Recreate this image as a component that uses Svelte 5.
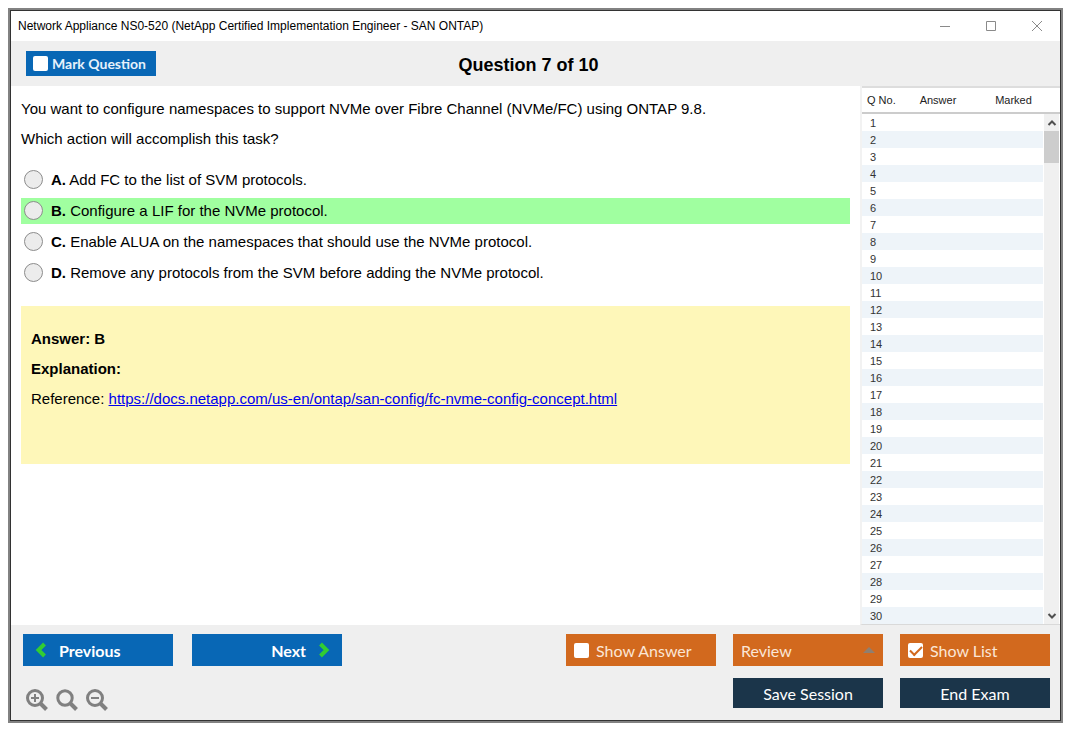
<script>
	const total = 10;
	const current = 7;
	const options = [
		{ id: 'A', text: 'Add FC to the list of SVM protocols.' },
		{ id: 'B', text: 'Configure a LIF for the NVMe protocol.' },
		{ id: 'C', text: 'Enable ALUA on the namespaces that should use the NVMe protocol.' },
		{ id: 'D', text: 'Remove any protocols from the SVM before adding the NVMe protocol.' }
	];
	const answer = 'B';
	const link = 'https://docs.netapp.com/us-en/ontap/san-config/fc-nvme-config-concept.html';
	const rows = Array.from({ length: 30 }, (_, i) => i + 1);

	let selected = $state(null);
	let marked = $state(false);
	let showAnswer = $state(false);
	let showList = $state(true);
</script>

<div class="window">
	<div class="titlebar">
		<span class="title">Network Appliance NS0-520 (NetApp Certified Implementation Engineer - SAN ONTAP)</span>
		<div class="controls">
			<button aria-label="Minimize">
				<svg width="12" height="12" viewBox="0 0 12 12"><path d="M1 6.5h10" /></svg>
			</button>
			<button aria-label="Maximize">
				<svg width="12" height="12" viewBox="0 0 12 12"><path d="M1.5 1.5h9v9h-9z" /></svg>
			</button>
			<button aria-label="Close">
				<svg width="12" height="12" viewBox="0 0 12 12"><path d="M1 1l10 10M11 1L1 11" /></svg>
			</button>
		</div>
	</div>

	<header>
		<label class="mark"><input type="checkbox" bind:checked={marked} />Mark Question</label>
		<h1>Question {current} of {total}</h1>
	</header>

	<main>
		<section class="question">
			<p>You want to configure namespaces to support NVMe over Fibre Channel (NVMe/FC) using ONTAP 9.8.</p>
			<p>Which action will accomplish this task?</p>

			<div class="options">
				{#each options as option}
					<label class="option" class:correct={option.id === answer}>
						<input type="radio" name="option" value={option.id} bind:group={selected} />
						<span><b>{option.id}.</b> {option.text}</span>
					</label>
				{/each}
			</div>

			<div class="explanation">
				<p><b>Answer: {answer}</b></p>
				<p><b>Explanation:</b></p>
				<p>Reference: <a href={link}>{link}</a></p>
			</div>
		</section>

		{#if showList}
			<aside>
				<table>
					<thead>
						<tr>
							<th class="number">Q No.</th>
							<th class="answer">Answer</th>
							<th class="flag">Marked</th>
						</tr>
					</thead>
					<tbody>
						{#each rows as row}
							<tr>
								<td class="number">{row}</td>
								<td></td>
								<td></td>
							</tr>
						{/each}
					</tbody>
				</table>
				<div class="scrollbar">
					<button aria-label="Scroll up">
						<svg width="10" height="8" viewBox="0 0 10 8"><path d="M1.5 6L5 2.5L8.5 6" /></svg>
					</button>
					<div class="thumb"></div>
					<button aria-label="Scroll down">
						<svg width="10" height="8" viewBox="0 0 10 8"><path d="M1.5 2L5 5.5L8.5 2" /></svg>
					</button>
				</div>
			</aside>
		{/if}
	</main>

	<footer>
		<div class="left">
			<div class="nav">
				<button class="btn blue">
					<svg width="12" height="16" viewBox="0 0 12 16"><path d="M9.5 2l-6 6l6 6" /></svg>
					Previous
				</button>
				<button class="btn blue next">
					Next
					<svg width="12" height="16" viewBox="0 0 12 16"><path d="M2.5 2l6 6l-6 6" /></svg>
				</button>
			</div>
			<div class="zoom">
				<button aria-label="Zoom in">
					<svg width="22" height="22" viewBox="0 0 22 22">
						<circle cx="9" cy="9" r="7.5" /><path class="handle" d="M14 14l6.5 6.5" /><path class="sign" d="M5 9h8M9 5v8" />
					</svg>
				</button>
				<button aria-label="Reset zoom">
					<svg width="22" height="22" viewBox="0 0 22 22">
						<circle class="thick" cx="9" cy="9" r="7.2" /><path class="handle" d="M14 14l6.5 6.5" />
					</svg>
				</button>
				<button aria-label="Zoom out">
					<svg width="22" height="22" viewBox="0 0 22 22">
						<circle cx="9" cy="9" r="7.5" /><path class="handle" d="M14 14l6.5 6.5" /><path class="sign" d="M5 9h8" />
					</svg>
				</button>
			</div>
		</div>

		<div class="right">
			<label class="btn orange"><input type="checkbox" bind:checked={showAnswer} />Show Answer</label>
			<button class="btn orange review">
				Review
				<svg width="12" height="6" viewBox="0 0 12 6"><path d="M0 6L6 0l6 6z" /></svg>
			</button>
			<label class="btn orange"><input type="checkbox" bind:checked={showList} />Show List</label>
			<button class="btn navy save">Save Session</button>
			<button class="btn navy">End Exam</button>
		</div>
	</footer>
</div>

<style>
	:global(body) {
		background: #fff;
	}
	:global(#app) {
		box-sizing: border-box;
		min-height: 100vh;
		padding: 8px 12px 12px 8px;
		display: flex;
	}
	* {
		box-sizing: border-box;
	}
	button {
		margin: 0;
		padding: 0;
		border: 0;
		background: none;
		font: inherit;
		color: inherit;
		cursor: pointer;
	}
	svg {
		display: block;
		fill: none;
	}
	.window {
		flex: 1;
		display: flex;
		flex-direction: column;
		border: 2px solid #828282;
		outline: 1px solid #333;
		outline-offset: -3px;
		padding: 1px;
		background: #fff;
		color: #000;
		font-family: 'Liberation Sans', Arial, sans-serif;
		font-size: 15px;
	}
	.titlebar {
		display: flex;
		align-items: center;
		justify-content: space-between;
		height: 30px;
		padding-left: 7px;
		font-size: 12px;
	}
	.controls {
		display: flex;
	}
	.controls button {
		width: 46px;
		height: 28px;
		display: flex;
		align-items: center;
		justify-content: center;
	}
	.controls path {
		stroke: #8a8a8a;
	}
	header {
		display: grid;
		grid-template-columns: 1fr auto 1fr;
		align-items: center;
		height: 45px;
		padding: 0 29px 0 15px;
		background: #efefef;
	}
	.mark {
		justify-self: start;
		display: flex;
		align-items: center;
		gap: 4px;
		width: 130px;
		height: 25px;
		padding-left: 7px;
		background: #0867b5;
		color: #e6f1fb;
		font: bold 14px Lato, sans-serif;
	}
	input[type='checkbox'] {
		appearance: none;
		display: grid;
		place-items: center;
		margin: 0;
		width: 15px;
		height: 15px;
		border-radius: 2px;
		background: #fff;
	}
	input[type='checkbox']:checked::before {
		content: '';
		width: 10px;
		height: 5px;
		border-left: 2px solid #d2691e;
		border-bottom: 2px solid #d2691e;
		transform: translateY(-1px) rotate(-45deg);
	}
	h1 {
		margin: 4px 0 0;
		font-size: 18px;
	}
	main {
		flex: 1;
		display: flex;
	}
	.question {
		flex: 1;
		padding: 14px 10px 0;
	}
	.question p {
		margin: 0 0 12px;
		line-height: 18px;
	}
	.options {
		display: grid;
		gap: 5px;
		margin-top: 19px;
	}
	.option {
		display: flex;
		align-items: center;
		gap: 8px;
		height: 26px;
		padding: 0 0 1px 3px;
	}
	.option.correct {
		background: #a0ffa0;
	}
	input[type='radio'] {
		appearance: none;
		margin: 0;
		width: 19px;
		height: 19px;
		border: 1px solid #8c8c8c;
		border-radius: 50%;
		background: #ececec;
	}
	input[type='radio']:checked {
		background: radial-gradient(#333 4px, #ececec 5px);
	}
	.explanation {
		margin-top: 20px;
		padding: 24px 10px 44px;
		background: #fef7b9;
	}
	a {
		color: #0000ee;
	}
	aside {
		position: relative;
		width: 200px;
		border-left: 2px solid #f2f2f2;
		border-bottom: 1px solid #d9d9d9;
	}
	table {
		width: 100%;
		border-collapse: separate;
		border-spacing: 0;
		table-layout: fixed;
		font-size: 11px;
		color: #333;
	}
	th {
		height: 28px;
		padding: 0;
		border-top: 2px solid #ddd;
		border-bottom: 2px solid #ccc;
		font-weight: normal;
		color: #222;
	}
	td {
		height: 17px;
		padding: 1px 0 0;
		line-height: 16px;
	}
	th.number {
		width: 38px;
		padding-left: 5px;
		text-align: left;
	}
	th.answer {
		width: 76px;
	}
	th.flag {
		padding-right: 9px;
	}
	td.number {
		padding-left: 8px;
	}
	tbody tr:nth-child(even) {
		background: #eef4f9;
	}
	.scrollbar {
		position: absolute;
		top: 28px;
		right: 0;
		bottom: 0;
		width: 17px;
		display: flex;
		flex-direction: column;
		border: solid #fff;
		border-width: 0 1px;
		background: #f0f0f0;
	}
	.scrollbar button {
		height: 17px;
		display: flex;
		align-items: center;
		justify-content: center;
	}
	.scrollbar button:last-child {
		margin-top: auto;
	}
	.scrollbar path {
		stroke: #505050;
		stroke-width: 2;
	}
	.thumb {
		height: 32px;
		background: #cdcdcd;
	}
	footer {
		display: flex;
		justify-content: space-between;
		height: 95px;
		padding: 9px 10px 0 12px;
		background: #efefef;
	}
	.nav {
		display: flex;
		gap: 19px;
	}
	.btn {
		display: flex;
		align-items: center;
		height: 32px;
		padding: 0 8px;
		font: 16px Lato, sans-serif;
		color: #fff;
	}
	.blue {
		width: 150px;
		gap: 12px;
		padding: 0 12px;
		background: #0867b5;
		font-weight: bold;
	}
	.blue path {
		stroke: #32cd32;
		stroke-width: 4;
	}
	.next {
		justify-content: flex-end;
	}
	.zoom {
		display: flex;
		gap: 8px;
		padding: 23px 3px 0;
	}
	.zoom svg {
		stroke: #808080;
		stroke-width: 3;
	}
	.zoom .handle {
		stroke-width: 4;
	}
	.zoom .sign {
		stroke-width: 2;
	}
	.right {
		display: grid;
		grid-template-columns: repeat(3, 150px);
		grid-template-rows: 32px 30px;
		gap: 12px 17px;
	}
	.orange {
		gap: 7px;
		background: #d2691e;
		color: #fbe6d6;
	}
	.review {
		justify-content: space-between;
	}
	.review path {
		fill: #8f7f70;
	}
	.navy {
		height: 30px;
		justify-content: center;
		background: #1b354a;
	}
	.save {
		grid-column: 2;
	}
</style>
